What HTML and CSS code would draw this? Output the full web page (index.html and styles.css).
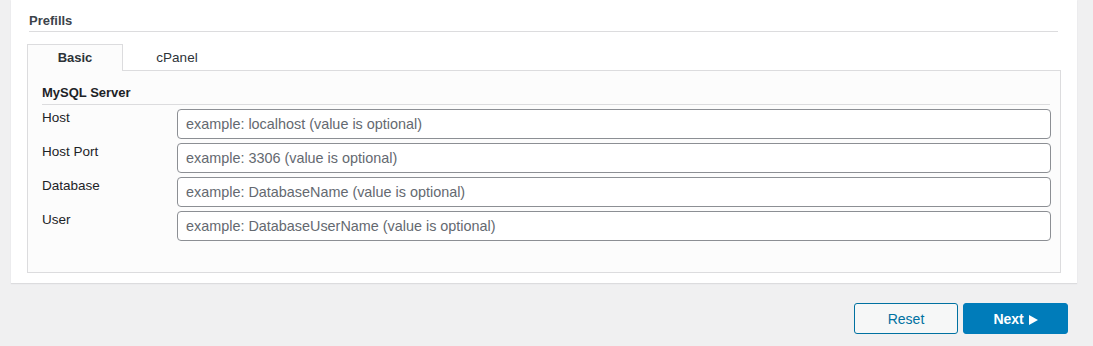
FILE: index.html
```html
<!DOCTYPE html>
<html lang="en">
<head>
<meta charset="UTF-8" />
<title>Prefills</title>
<link rel="stylesheet" href="styles.css">
</head>
<body>

<div class="panel">
  <h2 class="panel-title">Prefills</h2>

  <div class="tabs">
    <div class="tab active">Basic</div>
    <div class="tab">cPanel</div>
  </div>

  <div class="tab-box">
    <h3 class="group-title">MySQL Server</h3>
    <div class="fields">
      <label class="field-label" for="dbHost">Host</label>
      <input class="field-input" id="dbHost" type="text" placeholder="example: localhost (value is optional)" />

      <label class="field-label" for="dbPort">Host Port</label>
      <input class="field-input" id="dbPort" type="text" placeholder="example: 3306 (value is optional)" />

      <label class="field-label" for="dbName">Database</label>
      <input class="field-input" id="dbName" type="text" placeholder="example: DatabaseName (value is optional)" />

      <label class="field-label" for="dbUser">User</label>
      <input class="field-input" id="dbUser" type="text" placeholder="example: DatabaseUserName (value is optional)" />
    </div>
  </div>
</div>

<div class="actions">
  <button class="btn btn-secondary">Reset</button>
  <button class="btn btn-primary">Next
    <svg class="arrow" width="9" height="10" viewBox="0 0 9 10"><path d="M0 0 L9 5 L0 10 Z" fill="#fff"/></svg>
  </button>
</div>

</body>
</html>
```

FILE: styles.css
```css
* {
  margin: 0; padding: 0; box-sizing: border-box;
}
body {
  background: #f0f0f1;
  color: #2c3338;
  font-family: "Liberation Sans", Arial, sans-serif;
  font-size: 13px;
}
.panel {
  margin: 0 16px 0 11px;
  padding: 11px 16px 10px 16px;
  background: #fff;
  box-shadow: 0 1px 1px #dcdcde;
}
.panel-title {
  margin: 0 3px 0 2px;
  font-size: 13px;
  font-weight: bold;
  line-height: 20px;
  color: #3c434a;
  border-bottom: 1px solid #dcdcde;
}
.tabs {
  display: flex;
  margin-top: 12px;
}
.tab {
  width: 96px;
  height: 27px;
  line-height: 26px;
  text-align: center;
  font-size: 13.5px;
  color: #2c3338;
  border: 1px solid transparent;
  border-bottom: none;
  margin-bottom: -1px;
}
.tab + .tab {
  margin-left: 6px;
}
.tab.active {
  font-weight: bold;
  font-size: 13px;
  background: #fcfcfc;
  border-color: #dcdcde;
  position: relative;
  z-index: 1;
}
.tab-box {
  background: #fcfcfc;
  border: 1px solid #dcdcde;
  padding: 13px 10px 31px 14px;
}
.group-title {
  font-size: 13px;
  font-weight: bold;
  line-height: 18px;
  color: #1d2327;
  padding-bottom: 2px;
  border-bottom: 1px solid #dcdcde;
}
.fields {
  display: grid;
  grid-template-columns: 135px 1fr;
  row-gap: 4px;
  margin-top: 4px;
  margin-right: -1px;
}
.field-label {
  font-size: 13.5px;
  line-height: 18px;
  color: #1d2327;
}
.field-input {
  height: 30px;
  padding: 0 8px;
  border: 1px solid #8c8f94;
  border-radius: 4px;
  background: #fff;
  font-family: "Liberation Sans", Arial, sans-serif;
  font-size: 14.4px;
  color: #2c3338;
}
.field-input::placeholder {
  color: #646970;
}
.actions {
  display: flex;
  justify-content: flex-end;
  gap: 5px;
  margin-top: 20px;
  padding-right: 25px;
}
.btn {
  height: 31px;
  border-radius: 3px;
  font-family: "Liberation Sans", Arial, sans-serif;
  font-size: 14px;
  cursor: pointer;
}
.btn-secondary {
  width: 104px;
  background: #f6f7f7;
  border: 1px solid #0071a1;
  color: #0071a1;
}
.btn-primary {
  width: 105px;
  background: #007cba;
  border: 1px solid #007cba;
  color: #fff;
  font-weight: 600;
}
.arrow {
  margin-left: 1px;
  vertical-align: -1px;
}
```
